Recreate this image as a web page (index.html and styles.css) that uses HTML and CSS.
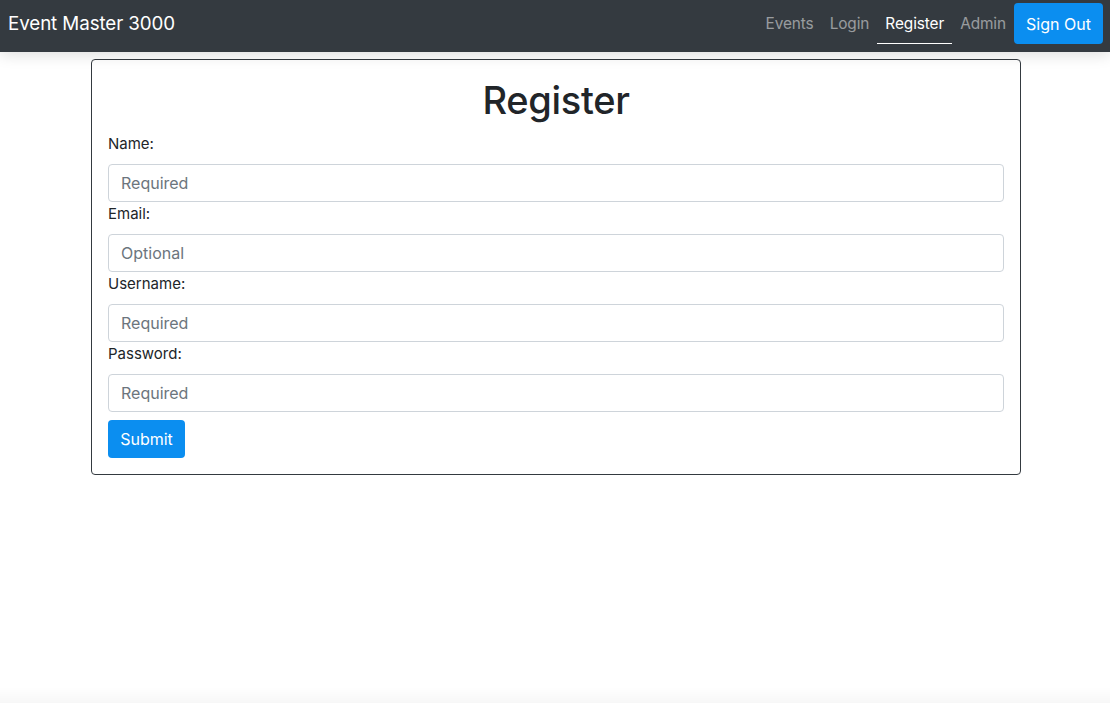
FILE: index.html
```html
<!DOCTYPE html>
<html>
<head>
<meta charset="utf-8">
<link rel="stylesheet" href="styles.css">
</head>
<body>
<nav class="navbar">
  <a class="brand" href="#">Event Master 3000</a>
  <div class="nav-links">
    <a class="nav-link" href="#">Events</a>
    <a class="nav-link" href="#">Login</a>
    <a class="nav-link active" href="#">Register</a>
    <a class="nav-link" href="#">Admin</a>
    <button class="btn btn-nav">Sign Out</button>
  </div>
</nav>
<main class="wrap">
  <form class="card">
    <h1 class="title">Register</h1>
    <label class="label">Name:</label>
    <input class="input" type="text" placeholder="Required">
    <label class="label">Email:</label>
    <input class="input" type="text" placeholder="Optional">
    <label class="label">Username:</label>
    <input class="input" type="text" placeholder="Required">
    <label class="label">Password:</label>
    <input class="input" type="password" placeholder="Required">
    <div class="actions"><button class="btn btn-submit" type="button">Submit</button></div>
  </form>
</main>
<div class="bottom-shade"></div>
</body>
</html>
```

FILE: styles.css
```css
* { box-sizing: border-box; }
html, body { margin: 0; padding: 0; }
body {
  font-family: Inter, "Liberation Sans", Arial, sans-serif;
  font-size: 16px;
  line-height: 24px;
  color: #212529;
  background: #fff;
  height: 703px;
  overflow: hidden;
}
.navbar {
  position: relative;
  z-index: 2;
  height: 52px;
  background: #343a40;
  display: flex;
  align-items: flex-start;
  justify-content: space-between;
  padding: 0 7px 0 8px;
  box-shadow: 0 3px 14px rgba(0,0,0,0.13);
}
.brand {
  color: #fff;
  text-decoration: none;
  font-size: 18.8px;
  line-height: 48px;
  letter-spacing: -0.1px;
}
.nav-links { display: flex; align-items: flex-start; }
.nav-link {
  color: rgba(255,255,255,0.5);
  text-decoration: none;
  padding: 0 8px;
  height: 44px;
  line-height: 47px;
  font-size: 15.4px;
  letter-spacing: -0.1px;
}
.nav-link.active {
  color: #fff;
  border-bottom: 1px solid #fff;
}
.btn {
  font-family: inherit;
  border: none;
  color: #fff;
  background: #0b8ef0;
  border-radius: 4px;
  cursor: pointer;
}
.btn-nav {
  margin-top: 3px;
  height: 41px;
  width: 89px;
  font-size: 16px;
  padding: 0;
}
.wrap {
  padding: 7px 0 0 2px;
}
.card {
  width: 930px;
  margin: 0 auto;
  border: 1px solid #343a40;
  border-radius: 4px;
  padding: 16px;
  display: flex;
  flex-direction: column;
}
.title {
  margin: 0 0 8px;
  text-align: center;
  font-size: 38px;
  line-height: 49px;
  font-weight: 500;
  letter-spacing: -0.3px;
  margin-bottom: 7px;
}
.label {
  display: block;
  line-height: 24px;
  margin-bottom: 8px;
  font-size: 15px;
}
.input {
  display: block;
  width: 100%;
  height: 38px;
  padding: 6px 12px;
  font-family: inherit;
  font-size: 16px;
  color: #495057;
  border: 1px solid #ced4da;
  border-radius: 4px;
  background: #fff;
}
.input::placeholder { color: #6c757d; }
.actions { margin-top: 8px; }
.btn-submit {
  height: 38px;
  width: 77px;
  font-size: 16px;
  padding: 0;
}
.bottom-shade {
  position: fixed;
  left: 0;
  right: 0;
  bottom: 0;
  height: 16px;
  background: linear-gradient(to bottom, rgba(0,0,0,0), rgba(0,0,0,0.03));
}
```
